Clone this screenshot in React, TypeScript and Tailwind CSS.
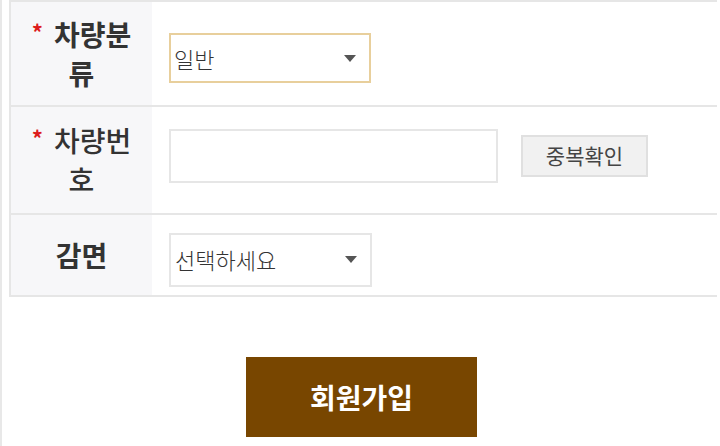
import React from 'react';

const FONT = "font-['Noto_Sans_CJK_KR','Noto_Sans',sans-serif]";

const Arrow: React.FC = () => (
  <svg width="12" height="7" viewBox="0 0 12 7" className="shrink-0">
    <path d="M0 0 L12 0 L6 7 Z" fill="#555" />
  </svg>
);

interface RowProps {
  label: React.ReactNode;
  required?: boolean;
  weight?: string;
  height: string;
  children: React.ReactNode;
}

const Row: React.FC<RowProps> = ({ label, required, weight = 'font-bold', height, children }) => (
  <div className={`flex border-b-2 border-[#e6e6e6] ${height}`}>
    <div className="w-[141px] shrink-0 bg-[#f7f7f9] flex items-center justify-center">
      <div className={`text-center text-[28px] leading-[37px] text-[#333] ${weight}`}>
        {required && <span className="text-[#dd1c1c] text-[22px] font-bold relative top-[-5px] mr-[11px]">*</span>}
        {label}
      </div>
    </div>
    <div className="flex-1 flex items-center pl-[17px]">{children}</div>
  </div>
);

const App: React.FC = () => {
  return (
    <div className={`min-h-[446px] w-[720px] bg-white border-l-2 border-[#e8e8e8] pl-[7px] ${FONT}`}>
      <div className="mr-[3px] border-l-2 border-t-2 border-[#e6e6e6]">
        <Row label={<>차량분<br />류</>} required height="h-[105px]">
          <div className="mt-[9px] w-[202px] h-[50px] border-2 border-[#e8cf9c] flex items-center justify-between pl-[3px] pr-[13px]">
            <span className="text-[22px] text-[#333] font-light">일반</span>
            <Arrow />
          </div>
        </Row>
        <Row label={<>차량번<br />호</>} required weight="font-medium" height="h-[108px]">
          <div className="mb-[9px] flex items-center">
            <div className="w-[329px] h-[54px] border-2 border-[#e6e6e6] bg-white" />
            <button className="ml-[23px] w-[127px] h-[42px] bg-[#f1f1f1] border-2 border-[#e0e0e0] text-[21px] text-[#444]">
              중복확인
            </button>
          </div>
        </Row>
        <Row label="감면" height="h-[82px]">
          <div className="mt-[9px] w-[203px] h-[54px] border-2 border-[#e6e6e6] flex items-center justify-between pl-[4px] pr-[13px]">
            <span className="text-[22px] text-[#333] font-light">선택하세요</span>
            <Arrow />
          </div>
        </Row>
      </div>
      <div className="flex justify-center pt-[60px] pr-[6px]">
        <button className="w-[231px] h-[80px] bg-[#784600] text-white text-[28px] font-bold">
          회원가입
        </button>
      </div>
    </div>
  );
};

export default App;
